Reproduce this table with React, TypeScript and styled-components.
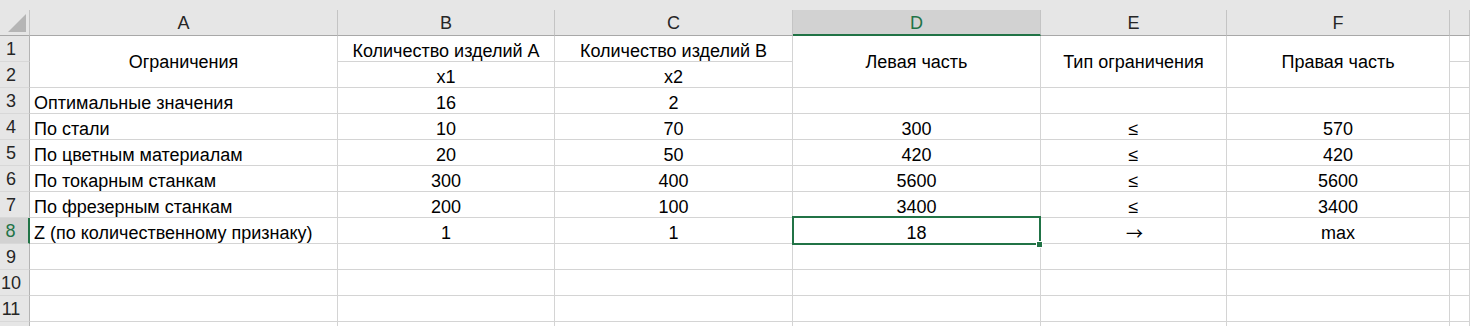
import React from 'react';
import styled, { createGlobalStyle, css } from 'styled-components';

const GREEN = '#217346';

const GlobalStyle = createGlobalStyle`
  html, body {
    margin: 0;
    padding: 0;
    background: #ffffff;
  }
  body {
    font-family: "Liberation Sans", Arial, sans-serif;
  }
`;

const Frame = styled.div`
  width: 1470px;
  height: 326px;
  overflow: hidden;
  background: #e6e6e6;
`;

const TopStrip = styled.div`
  height: 10px;
  background: #e6e6e6;
`;

const Sheet = styled.div`
  display: grid;
  grid-template-columns: 30px 308px 217px 238px 248px 186px 223px 1fr;
  grid-template-rows: 26px;
  grid-auto-rows: 26px;
  background: #ffffff;
  font-size: 18px;
  line-height: 20px;
  color: #000;
`;

const Corner = styled.div`
  position: relative;
  background: #e6e6e6;
  border-right: 1px solid #c4c4c4;
  border-bottom: 1px solid #a8a8a8;
  box-sizing: border-box;
`;

const CornerTriangle = styled.svg`
  position: absolute;
  left: 8px;
  top: 4px;
`;

const ColHeader = styled.div<{ $active?: boolean }>`
  display: flex;
  align-items: center;
  justify-content: center;
  padding-top: 1px;
  box-sizing: border-box;
  background: #e6e6e6;
  color: #262626;
  border-right: 1px solid #c4c4c4;
  border-bottom: 1px solid #a8a8a8;
  ${(p) =>
    p.$active &&
    css`
      background: #d2d2d2;
      color: ${GREEN};
      border-bottom: 2px solid ${GREEN};
    `}
`;

const RowHeader = styled.div<{ $active?: boolean }>`
  display: flex;
  align-items: center;
  justify-content: center;
  padding-right: 7px;
  box-sizing: border-box;
  background: #e6e6e6;
  color: #262626;
  border-right: 1px solid #b4b4b4;
  border-bottom: 1px solid #d8d8d8;
  ${(p) =>
    p.$active &&
    css`
      background: #d2d2d2;
      color: ${GREEN};
      border-right: 2px solid ${GREEN};
    `}
`;

const Cell = styled.div<{ $left?: boolean; $span?: number }>`
  position: relative;
  display: flex;
  align-items: ${(p) => (p.$span ? 'center' : 'flex-end')};
  justify-content: ${(p) => (p.$left ? 'flex-start' : 'center')};
  padding: 0 0 0 ${(p) => (p.$left ? '4px' : '0')};
  box-sizing: border-box;
  white-space: nowrap;
  overflow: visible;
  border-right: 1px solid #d4d4d4;
  border-bottom: 1px solid #d4d4d4;
  ${(p) => p.$span && css`grid-row: span ${p.$span};`}
`;

// thin open-headed arrow for the objective direction
const Arrow = styled.span`
  font-family: "Noto Sans CJK JP", sans-serif;
  font-size: 17px;
  line-height: 20px;
  margin-left: 2px;
`;

const Selection = styled.div`
  position: absolute;
  left: -1px;
  top: -2px;
  right: -1px;
  bottom: -2px;
  border: 2px solid ${GREEN};
  z-index: 2;
  pointer-events: none;
`;

const FillHandle = styled.div`
  position: absolute;
  right: -4px;
  bottom: -5px;
  width: 7px;
  height: 7px;
  box-sizing: border-box;
  background: ${GREEN};
  border: 1px solid #ffffff;
`;

const columns = ['A', 'B', 'C', 'D', 'E', 'F', ''];

type Row = { label: string; values: string[] };

const body: Row[] = [
  { label: 'Оптимальные значения', values: ['16', '2', '', '', ''] },
  { label: 'По стали', values: ['10', '70', '300', '≤', '570'] },
  { label: 'По цветным материалам', values: ['20', '50', '420', '≤', '420'] },
  { label: 'По токарным станкам', values: ['300', '400', '5600', '≤', '5600'] },
  { label: 'По фрезерным станкам', values: ['200', '100', '3400', '≤', '3400'] },
  { label: 'Z (по количественному признаку)', values: ['1', '1', '18', '→', 'max'] },
];

export default function App() {
  const activeRow = 8;
  const activeCol = 'D';

  return (
    <>
      <GlobalStyle />
      <Frame>
        <TopStrip />
        <Sheet>
          <Corner>
            <CornerTriangle width="19" height="19" viewBox="0 0 19 19">
              <polygon points="0,18 18,18 18,0" fill="#b5b5b5" />
            </CornerTriangle>
          </Corner>
          {columns.map((c, i) => (
            <ColHeader key={i} $active={c === activeCol}>
              {c}
            </ColHeader>
          ))}

          {/* rows 1-2: table heading with merged cells */}
          <RowHeader>1</RowHeader>
          <Cell $span={2}>Ограничения</Cell>
          <Cell>Количество изделий А</Cell>
          <Cell>Количество изделий В</Cell>
          <Cell $span={2}>Левая часть</Cell>
          <Cell $span={2}>Тип ограничения</Cell>
          <Cell $span={2}>Правая часть</Cell>
          <Cell />

          <RowHeader>2</RowHeader>
          <Cell>x1</Cell>
          <Cell>x2</Cell>
          <Cell />

          {body.map((row, r) => {
            const n = r + 3;
            return (
              <React.Fragment key={n}>
                <RowHeader $active={n === activeRow}>{n}</RowHeader>
                <Cell $left>{row.label}</Cell>
                {row.values.map((v, j) => (
                  <Cell key={j}>
                    {v === '→' ? <Arrow>{v}</Arrow> : v}
                    {n === activeRow && j === 2 && (
                      <Selection>
                        <FillHandle />
                      </Selection>
                    )}
                  </Cell>
                ))}
                <Cell />
              </React.Fragment>
            );
          })}

          {[9, 10, 11, 12].map((n) => (
            <React.Fragment key={n}>
              {/* row 12 only peeks in at the bottom edge, its number stays below */}
              <RowHeader>{n < 12 ? n : ''}</RowHeader>
              {columns.map((_, j) => (
                <Cell key={j} />
              ))}
            </React.Fragment>
          ))}
        </Sheet>
      </Frame>
    </>
  );
}
